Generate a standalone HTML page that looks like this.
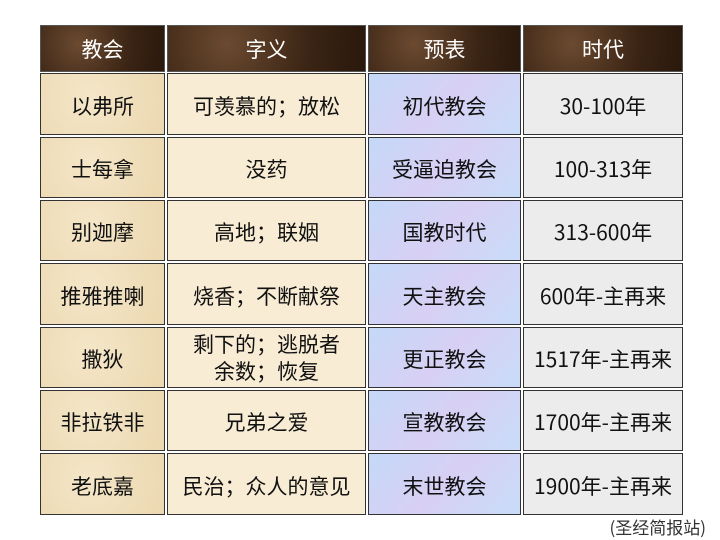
<!DOCTYPE html>
<html><head><meta charset="utf-8"><style>
body{margin:0;width:720px;height:540px;background:#fff;position:relative;overflow:hidden;font-family:"Noto Sans CJK SC",sans-serif;}
.c{position:absolute;box-sizing:border-box;border:1.5px solid #333;display:flex;align-items:center;justify-content:center;text-align:center;font-size:21px;color:#111;line-height:27px;padding-top:4px}
.h{background:radial-gradient(circle at 30% 40%,#6b4a30,#3a2414 60%,#2a180c);color:#fff;border-color:#555;padding-top:2px}
.a{background:radial-gradient(circle at 40% 40%,#f4e6c8,#ecd8b0)}
.b{background:#f8ecd4}
.p{background:linear-gradient(135deg,#c4d8f8,#d8d0f4 50%,#c8dcf8)}
.g{background:#ececec}
.n{position:absolute;right:14px;top:514px;font-size:17px;color:#333}
</style></head><body>
<div class="c h" style="left:40px;top:25px;width:125px;height:47px">教会</div>
<div class="c h" style="left:167px;top:25px;width:199px;height:47px">字义</div>
<div class="c h" style="left:368px;top:25px;width:153px;height:47px">预表</div>
<div class="c h" style="left:523px;top:25px;width:160px;height:47px">时代</div>

<div class="c a" style="left:40px;top:73px;width:125px;height:62px">以弗所</div>
<div class="c b" style="left:167px;top:73px;width:199px;height:62px">可羡慕的；放松</div>
<div class="c p" style="left:368px;top:73px;width:153px;height:62px">初代教会</div>
<div class="c g" style="left:523px;top:73px;width:160px;height:62px">30-100年</div>

<div class="c a" style="left:40px;top:137px;width:125px;height:61px">士每拿</div>
<div class="c b" style="left:167px;top:137px;width:199px;height:61px">没药</div>
<div class="c p" style="left:368px;top:137px;width:153px;height:61px">受逼迫教会</div>
<div class="c g" style="left:523px;top:137px;width:160px;height:61px">100-313年</div>

<div class="c a" style="left:40px;top:200px;width:125px;height:61px">别迦摩</div>
<div class="c b" style="left:167px;top:200px;width:199px;height:61px">高地；联姻</div>
<div class="c p" style="left:368px;top:200px;width:153px;height:61px">国教时代</div>
<div class="c g" style="left:523px;top:200px;width:160px;height:61px">313-600年</div>

<div class="c a" style="left:40px;top:263px;width:125px;height:62px">推雅推喇</div>
<div class="c b" style="left:167px;top:263px;width:199px;height:62px">烧香；不断献祭</div>
<div class="c p" style="left:368px;top:263px;width:153px;height:62px">天主教会</div>
<div class="c g" style="left:523px;top:263px;width:160px;height:62px">600年-主再来</div>

<div class="c a" style="left:40px;top:327px;width:125px;height:61px">撒狄</div>
<div class="c b" style="left:167px;top:327px;width:199px;height:61px;padding-top:0">剩下的；逃脱者<br>余数；恢复</div>
<div class="c p" style="left:368px;top:327px;width:153px;height:61px">更正教会</div>
<div class="c g" style="left:523px;top:327px;width:160px;height:61px">1517年-主再来</div>

<div class="c a" style="left:40px;top:390px;width:125px;height:61px">非拉铁非</div>
<div class="c b" style="left:167px;top:390px;width:199px;height:61px">兄弟之爱</div>
<div class="c p" style="left:368px;top:390px;width:153px;height:61px">宣教教会</div>
<div class="c g" style="left:523px;top:390px;width:160px;height:61px">1700年-主再来</div>

<div class="c a" style="left:40px;top:453px;width:125px;height:62px">老底嘉</div>
<div class="c b" style="left:167px;top:453px;width:199px;height:62px">民治；众人的意见</div>
<div class="c p" style="left:368px;top:453px;width:153px;height:62px">末世教会</div>
<div class="c g" style="left:523px;top:453px;width:160px;height:62px">1900年-主再来</div>

<div class="n">(圣经简报站)</div>
</body></html>
